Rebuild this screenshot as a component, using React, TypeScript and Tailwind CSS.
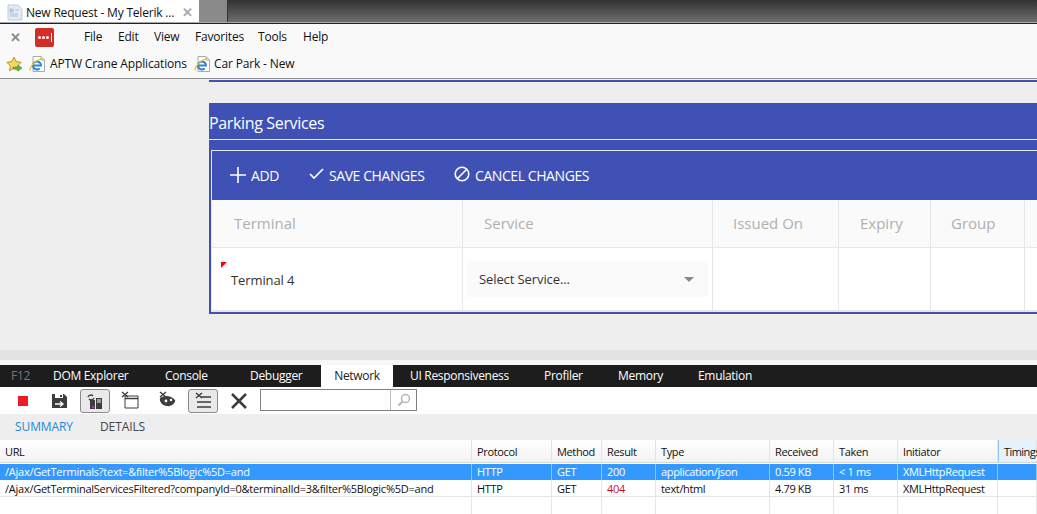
import type { ReactNode } from "react";

function IeIcon() {
  return (
    <svg width="17" height="18" viewBox="0 0 17 18" className="shrink-0">
      <path d="M4 1.500h8l3.500 3.500v11.500H4z" fill="#fff" stroke="#a3abb5" strokeWidth="1" />
      <path d="M12 1.500v3.500h3.500" fill="#ececec" stroke="#a3abb5" />
      <path d="M4.500 10.500h7.500a4 4 0 1 0-1.300 3" fill="none" stroke="#2b86d6" strokeWidth="2" />
      <path d="M1 15.500C1 11 7 5 14 3" fill="none" stroke="#efbd2b" strokeWidth="1.300" />
    </svg>
  );
}

function Cell({ w, children, className = "" }: { w: string; children?: ReactNode; className?: string }) {
  return <div className={`${w} shrink-0 ${className}`}>{children}</div>;
}

const cols = ["w-[472px]", "w-[80px]", "w-[50px]", "w-[54px]", "w-[114px]", "w-[64px]", "w-[64px]", "w-[100px]", "w-[39px]"];
const heads = ["URL", "Protocol", "Method", "Result", "Type", "Received", "Taken", "Initiator", "Timings"];
const row1 = ["/Ajax/GetTerminals?text=&filter%5Blogic%5D=and", "HTTP", "GET", "200", "application/json", "0.59 KB", "< 1 ms", "XMLHttpRequest", ""];
const row2 = ["/Ajax/GetTerminalServicesFiltered?companyId=0&terminalId=3&filter%5Blogic%5D=and", "HTTP", "GET", "404", "text/html", "4.79 KB", "31 ms", "XMLHttpRequest", ""];

export default function App() {
  return (
    <div className="w-[1037px] h-[514px] overflow-hidden flex flex-col bg-[#eeeeee] text-[12px] text-[#111] font-['Open_Sans',sans-serif]">
      {/* window tab strip */}
      <div className="h-[24px] flex shrink-0 bg-[#222] border-b border-[#222]">
        <div className="w-full h-[23px] flex border-b border-[#a8a8a8]">
          <div className="w-[199px] h-[22px] bg-white flex items-center pl-[7px] pr-[6px] gap-[3px] text-[12px] tracking-[-0.2px] text-[#111] pt-[3px]">
            <svg width="16" height="17" viewBox="0 0 16 17" className="shrink-0">
              <path d="M1 1h10l4 4v11H1z" fill="#e4ebf5" stroke="#c2ccd8" />
              <path d="M3 5h3v3H3zM3 10h8M3 12h8M8 6h4" stroke="#a9c0de" fill="#bcd0ea" />
            </svg>
            <span className="flex-1 whitespace-nowrap">New Request - My Telerik ...</span>
            <span className="text-[#a8a8a8] text-[13px] font-bold leading-none">✕</span>
          </div>
          <div className="w-[29px] h-[22px] bg-[#8a8a8a] border-r border-[#333]" />
          <div className="flex-1 h-[22px] bg-gradient-to-b from-[#333333] to-[#6e6e6e]" />
        </div>
      </div>

      {/* browser chrome */}
      <div className="h-[55px] shrink-0 bg-[#f9f9f9] border-b border-[#8f8f8f] flex flex-col">
        <div className="h-[27px] flex items-center">
          <span className="w-[35px] pl-[10px] text-[#8a8a8a] text-[13px] font-bold leading-none">✕</span>
          <div className="w-[19px] h-[19px] bg-[#d32d27] rounded-[2px] flex items-center justify-center gap-[1px]">
            <span className="w-[3px] h-[3px] rounded-full bg-white" />
            <span className="w-[3px] h-[3px] rounded-full bg-white" />
            <span className="w-[3px] h-[3px] rounded-full bg-white" />
            <span className="w-[1px] h-[9px] bg-white ml-[1px]" />
          </div>
          <nav className="flex ml-[30px] pb-[1px] tracking-[-0.2px]">
            <span className="w-[34px]">File</span>
            <span className="w-[36px]">Edit</span>
            <span className="w-[41px]">View</span>
            <span className="w-[63px]">Favorites</span>
            <span className="w-[45px]">Tools</span>
            <span>Help</span>
          </nav>
        </div>
        <div className="h-[27px] flex items-center pl-[6px] pb-[1px]">
          <svg width="17" height="17" viewBox="0 0 17 17" className="shrink-0">
            <path d="M8 1l2.200 4.600 5 .7-3.600 3.500.9 5L8 12.400 3.500 14.800l.9-5L.8 6.300l5-.7z" fill="#f6d75a" stroke="#b8962e" />
            <path d="M7 11h5V9l4 3-4 3v-2H7z" fill="#55b948" stroke="#3a8a32" strokeWidth=".5" />
          </svg>
          <span className="ml-[6px]"><IeIcon /></span>
          <span className="ml-[4px] w-[144px] whitespace-nowrap tracking-[-0.15px]">APTW Crane Applications</span>
          <IeIcon />
          <span className="ml-[3px] whitespace-nowrap tracking-[-0.15px]">Car Park - New</span>
        </div>
      </div>

      {/* page */}
      <div className="h-[271px] shrink-0 flex flex-col pl-[209px]">
        <div className="h-[1px]" />
        <div className="h-[2px] bg-[#3f51b5] w-full" />
        <div className="h-[21px]" />
        <section className="bg-[#3f51b5] border-b-[2px] border-[#3f51b5] h-[211px] flex flex-col">
          <div className="h-[37px] flex items-center pt-[4px] text-white text-[16px] tracking-[-0.35px] border-b border-[#e8e8e8] shrink-0">Parking Services</div>
          <div className="flex-1 min-h-0 pt-[10px] pl-[2px]">
            <div className="h-full bg-white border-t border-l border-[#e8e8e8] flex flex-col">
              <div className="h-[49px] shrink-0 bg-[#3f51b5] flex items-center pl-[18px] text-white text-[14px] tracking-[-0.42px]">
                <svg width="16" height="16" viewBox="0 0 16 16" className="mr-[5px] mb-[2px]">
                  <path d="M8 0v16M0 8h16" stroke="#fff" strokeWidth="1.600" />
                </svg>
                <span className="w-[58px]">ADD</span>
                <svg width="15" height="12" viewBox="0 0 15 12" className="mr-[5px] mb-[3px]">
                  <path d="M1 6l4 4 9-9" fill="none" stroke="#fff" strokeWidth="1.700" />
                </svg>
                <span className="w-[125px]">SAVE CHANGES</span>
                <svg width="16" height="16" viewBox="0 0 16 16" className="mr-[5px] mb-[3px]">
                  <circle cx="8" cy="8" r="6.800" fill="none" stroke="#fff" strokeWidth="1.600" />
                  <path d="M3.500 12.500l9-9" stroke="#fff" strokeWidth="1.600" />
                </svg>
                <span>CANCEL CHANGES</span>
              </div>
              <div className="h-[48px] shrink-0 flex bg-[#fafafa] border-b border-[#e6e6e6] text-[#b0b0b0] text-[15px]">
                <div className="w-[251px] border-r border-[#e6e6e6] pl-[22px] flex items-center">Terminal</div>
                <div className="w-[250px] border-r border-[#e6e6e6] pl-[21px] flex items-center">Service</div>
                <div className="w-[126px] border-r border-[#e6e6e6] pl-[20px] flex items-center">Issued On</div>
                <div className="w-[92px] border-r border-[#e6e6e6] pl-[21px] flex items-center">Expiry</div>
                <div className="w-[94px] border-r border-[#e6e6e6] pl-[20px] flex items-center">Group</div>
              </div>
              <div className="flex-1 min-h-0 flex bg-white text-[13px] text-[#333] tracking-[-0.1px] border-b-2 border-[#e6e6e6]">
                <div className="relative w-[251px] border-r border-[#e6e6e6] pl-[19px] pt-[3px] flex items-center">
                  <span className="absolute left-[9px] top-[14px] w-0 h-0 border-t-[6px] border-r-[6px] border-t-[#ff0000] border-r-transparent" />
                  Terminal 4
                </div>
                <div className="w-[250px] border-r border-[#e6e6e6] pl-[4px] pr-[4px] flex items-center">
                  <div className="h-[36px] flex-1 bg-[#fafafa] flex items-center justify-between pl-[12px] pr-[14px]">
                    <span className="pt-[2px]">Select Service...</span>
                    <span className="w-0 h-0 border-x-[5px] border-t-[5px] border-x-transparent border-t-[#8a8a8a]" />
                  </div>
                </div>
                <div className="w-[126px] border-r border-[#e6e6e6]" />
                <div className="w-[92px] border-r border-[#e6e6e6]" />
                <div className="w-[94px] border-r border-[#e6e6e6]" />
              </div>
            </div>
          </div>
        </section>
      </div>

      <div className="flex-1 min-h-0 flex flex-col">
        <div className="h-[10px] shrink-0 bg-[#e3e3e3]" />
        <div className="h-[5px] shrink-0 bg-[#f7f7f7]" />
        {/* F12 tabs */}
        <div className="h-[22px] shrink-0 bg-[#1d1d1d] flex text-white text-[12px] tracking-[-0.3px] items-center">
          <span className="w-[53px] pl-[11px] text-[#777]">F12</span>
          <span className="w-[112px]">DOM Explorer</span>
          <span className="w-[85px]">Console</span>
          <span className="w-[71px]">Debugger</span>
          <span className="w-[72px] h-full bg-white text-[#222] flex items-center justify-center">Network</span>
          <span className="w-[151px] pl-[17px] whitespace-nowrap">UI Responsiveness</span>
          <span className="w-[74px]">Profiler</span>
          <span className="w-[80px]">Memory</span>
          <span>Emulation</span>
        </div>
        {/* toolbar */}
        <div className="h-[27px] bg-white flex items-center shrink-0">
          <span className="ml-[18px] w-[10px] h-[10px] bg-[#ed1c24]" />
          <svg width="17" height="16" viewBox="0 0 17 16" className="ml-[23px]">
            <path d="M1 1h12l3 3v11H1z" fill="#3d3d3d" />
            <path d="M4 1h8v4H4z" fill="#fff" />
            <path d="M9 2h2v2H9z" fill="#3d3d3d" />
            <path d="M4 11h8M9 8.500l3 2.500-3 2.500" fill="none" stroke="#fff" strokeWidth="1.300" />
          </svg>
          <div className="ml-[12px] w-[30px] h-[24px] rounded-[3px] border border-[#8a8a8a] bg-[#e9e9e9] flex items-center justify-center">
            <svg width="18" height="18" viewBox="0 0 18 18">
              <path d="M2 5a3 3 0 0 1 5-1M8 6a3 3 0 0 1-5 1" fill="none" stroke="#3d3d3d" strokeWidth="1.400" />
              <path d="M4 8h5v9H4z" fill="#3d3d3d" />
              <path d="M10 6h6v11h-6z" fill="#3d3d3d" />
              <path d="M11 8h4M11 10h4" stroke="#fff" />
              <path d="M6 14h2v2H6z" fill="#d61fc4" />
            </svg>
          </div>
          <svg width="18" height="18" viewBox="0 0 18 18" className="ml-[11px] mb-[2px]">
            <path d="M4 5h13v12H4z" fill="#fff" stroke="#3d3d3d" />
            <path d="M4 7.500h13" stroke="#3d3d3d" strokeWidth="1.500" />
            <path d="M1 1l6 5M7 1L1 6" stroke="#3d3d3d" strokeWidth="1.400" />
          </svg>
          <svg width="20" height="18" viewBox="0 0 20 18" className="ml-[18px] mb-[2px]">
            <path d="M3 7c4-3 11-3 15 2 1 3-4 7-8 6-4 0-8-4-7-8z" fill="#3d3d3d" />
            <circle cx="9" cy="10" r="1.400" fill="#fff" />
            <circle cx="14" cy="9" r="1.200" fill="#fff" />
            <path d="M3 1l6 5M9 1L3 6" stroke="#3d3d3d" strokeWidth="1.400" />
          </svg>
          <div className="ml-[11px] w-[30px] h-[24px] rounded-[3px] border border-[#8a8a8a] bg-[#e9e9e9] flex items-center justify-center">
            <svg width="18" height="18" viewBox="0 0 18 18">
              <path d="M2 1l6 5M8 1L2 6M7 5h10M3 10h14M3 15h14" stroke="#3d3d3d" strokeWidth="1.500" />
            </svg>
          </div>
          <svg width="16" height="16" viewBox="0 0 16 16" className="ml-[13px]">
            <path d="M1 1l14 14M15 1L1 15" stroke="#3d3d3d" strokeWidth="2.500" />
          </svg>
          <div className="ml-[13px] w-[157px] h-[22px] border border-[#808080] flex justify-end mb-[2px]">
            <div className="w-[26px] h-full border-l border-[#bbb] flex items-center justify-center">
              <svg width="14" height="14" viewBox="0 0 14 14">
                <circle cx="8.500" cy="5.500" r="4" fill="none" stroke="#b5b5b5" strokeWidth="1.500" />
                <path d="M5.500 8.500L1.500 12.500" stroke="#b5b5b5" strokeWidth="2" />
              </svg>
            </div>
          </div>
        </div>
        {/* sub tabs */}
        <div className="h-[26px] bg-[#eeeeee] flex items-center text-[12px] tracking-[-0.1px] shrink-0">
          <span className="ml-[15px] w-[85px] text-[#1e88d8]">SUMMARY</span>
          <span className="text-[#444]">DETAILS</span>
        </div>
        {/* grid */}
        <div className="flex-1 min-h-0 bg-white text-[11px] tracking-[-0.35px]">
          <div className="h-[23px] flex bg-gradient-to-b from-white to-[#f2f2f2] border-b border-[#d8d8d8]">
            {heads.map((h, i) => (
              <Cell key={h} w={cols[i]} className={`h-full flex items-center pl-[5px] pt-[2px] whitespace-nowrap border-r border-[#e4e4e4] ${i === 8 ? "bg-[#e6f2fb] border-l border-l-[#8fc6ee] tracking-[-0.55px]" : ""}`}>{h}</Cell>
            ))}
          </div>
          <div className="h-[16px] flex bg-[#3399ff] text-white mt-[1px]">
            {row1.map((c, i) => (
              <Cell key={i} w={cols[i]} className={`h-full flex items-center pl-[5px] pt-[1px] whitespace-nowrap border-r border-[#8cc4fb] ${i === 0 ? "tracking-[-0.25px]" : ""}`}>{c}</Cell>
            ))}
          </div>
          <div className="h-[17px] flex text-[#111] border-b border-[#e6e6e6]">
            {row2.map((c, i) => (
              <Cell key={i} w={cols[i]} className={`h-full flex items-center pl-[5px] pt-[2px] whitespace-nowrap border-r border-[#e6e6e6] ${i === 0 ? "tracking-[-0.25px]" : ""} ${c === "404" ? "text-[#c8102e]" : ""}`}>{c}</Cell>
            ))}
          </div>
          <div className="h-[20px] flex">
            {row1.map((_, i) => (
              <Cell key={i} w={cols[i]} className="h-full border-r border-[#e6e6e6]" />
            ))}
          </div>
        </div>
      </div>
    </div>
  );
}
